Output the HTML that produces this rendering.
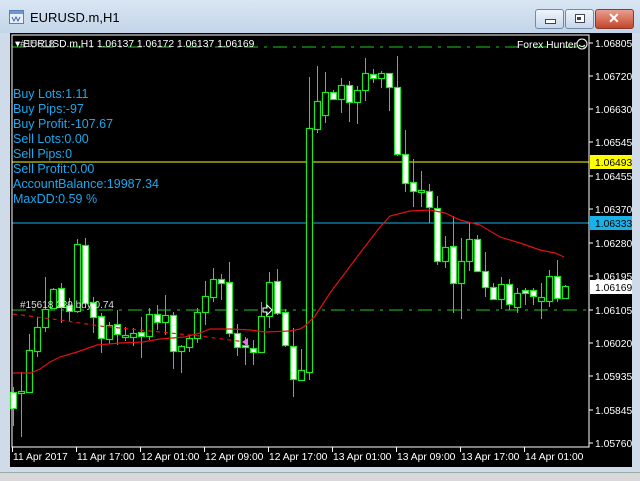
<!DOCTYPE html>
<html><head><meta charset="utf-8"><style>
html,body{margin:0;padding:0;width:640px;height:480px;overflow:hidden;background:#cfdbe8;font-family:"Liberation Sans",sans-serif}
#title{position:absolute;left:0;top:0;width:640px;height:33px;background:linear-gradient(#d9e6f3,#c3d5e9)}
#tt{position:absolute;left:30px;top:10px;font-size:13px;color:#000}
.btn{position:absolute;top:9px;height:18px;border:1px solid #6f8bab;border-radius:3px;background:linear-gradient(#eef4fa,#c7d7ea)}
#chart{position:absolute;left:10px;top:33px;width:622px;height:434px;background:#000}
#bot{position:absolute;left:0;top:472px;width:640px;height:8px;background:#d8d8d8;border-top:1px solid #9aa}
.t{font-family:"Liberation Sans",sans-serif;font-size:10.3px;fill:#fff}
.inf{position:absolute;left:13px;color:#1aa8ee;font-size:12.5px;line-height:15px}
</style></head><body>
<div id="title">
<svg style="position:absolute;left:9px;top:10px" width="16" height="15"><rect x="0.5" y="0.5" width="14" height="13" fill="#e8f0fa" stroke="#5b7fb0"/><rect x="1" y="1" width="13" height="3" fill="#6d98cc"/><path d="M3 7l2 4 2-4 2 4 2-4" stroke="#3b6cb0" fill="none"/></svg>
<div id="tt">EURUSD.m,H1</div>
<div class="btn" style="left:535px;width:27px"><div style="position:absolute;left:9px;top:9px;width:9px;height:3px;background:#fff;border:1px solid #445"></div></div>
<div class="btn" style="left:565px;width:27px"><div style="position:absolute;left:9px;top:4px;width:8px;height:7px;border:1px solid #445;background:#fff"></div><div style="position:absolute;left:11px;top:7px;width:4px;height:3px;background:#445"></div></div>
<div class="btn" style="left:595px;width:37px;background:linear-gradient(#e8a08f,#c4452c);border-color:#8a3a2a"><div style="position:absolute;left:12px;top:0px;color:#fff;font-weight:bold;font-size:14px">✕</div></div>
</div>
<div id="chart"></div>
<svg id="s" style="position:absolute;left:0;top:0" width="640" height="480"></svg>
<div class="inf" style="top:87px">Buy Lots:1.11<br>Buy Pips:-97<br>Buy Profit:-107.67<br>Sell Lots:0.00<br>Sell Pips:0<br>Sell Profit:0.00<br>AccountBalance:19987.34<br>MaxDD:0.59 %</div>
<div id="bot"></div>
<script>
var d=[[13,392,408,387,426,1],[21,391,393,372,437,0],[29,350,392,334,393,0],[37,327,351,317,357,0],[45,309,327,277,332,0],[53,289,308,288,305,0],[61,288,307,283,323,1],[69,305,311,298,322,1],[77,244,311,239,313,0],[85,245,303,238,305,1],[93,302,317,297,333,1],[101,316,338,313,353,1],[109,325,339,322,344,0],[117,324,334,310,345,1],[125,335,337,327,341,0],[133,333,337,328,346,0],[141,332,336,317,358,1],[149,314,336,308,340,0],[157,314,322,305,330,1],[165,315,322,295,335,0],[173,315,351,312,369,1],[181,346,351,345,373,0],[189,338,347,335,352,0],[197,312,338,308,343,0],[205,296,312,281,325,0],[213,279,297,268,302,0],[221,279,283,274,300,1],[229,282,333,262,337,1],[237,333,347,324,356,1],[245,345,347,337,365,1],[253,348,352,340,365,1],[261,316,352,302,353,0],[269,282,316,272,328,0],[277,281,313,269,315,1],[285,312,345,309,347,1],[293,346,379,328,397,1],[301,370,380,349,381,0],[309,128,372,77,380,0],[317,101,129,66,133,0],[325,92,115,72,123,0],[333,92,99,90,100,1],[341,85,99,78,113,0],[349,85,102,81,122,1],[357,90,102,86,124,0],[365,73,90,58,101,0],[373,74,78,69,83,1],[381,73,78,71,88,0],[389,73,87,73,111,1],[397,87,154,56,156,1],[405,154,183,130,192,1],[413,182,191,159,207,1],[421,190,192,171,207,0],[429,191,207,184,223,1],[437,208,261,196,265,1],[445,247,261,236,268,0],[453,246,283,216,313,1],[461,261,283,238,319,0],[469,239,261,223,271,0],[477,239,271,235,271,1],[485,271,287,252,297,1],[493,287,299,283,300,1],[501,284,299,277,309,0],[509,284,304,279,310,1],[517,293,307,288,313,0],[525,290,293,288,305,1],[533,290,296,288,305,1],[541,297,301,283,319,0],[549,276,301,270,307,0],[557,276,298,260,302,1],[565,286,298,285,299,0]];
var h='';
h+='<line x1="12" y1="47" x2="588" y2="47" stroke="#1ec81e" stroke-dasharray="14,6,3,6"/>';
h+='<line x1="12" y1="310" x2="588" y2="310" stroke="#1ec81e" stroke-dasharray="14,6,3,6"/>';
h+='<line x1="12" y1="162" x2="589" y2="162" stroke="#ffff00"/>';
h+='<line x1="12" y1="223" x2="589" y2="223" stroke="#1ab0e8"/>';
d.forEach(function(c){h+='<line x1="'+(c[0]+.5)+'" y1="'+c[3]+'" x2="'+(c[0]+.5)+'" y2="'+c[4]+'" stroke="#22e622"/>';
var hh=Math.max(c[2]-c[1],1);h+='<rect x="'+(c[0]-2.5)+'" y="'+(c[1]+.5)+'" width="6" height="'+hh+'" fill="'+(c[5]?'#fff':'#000')+'" stroke="#22e622" stroke-width="1.2"/>';});
h+='<polyline fill="none" stroke="#e01010" stroke-width="1.2" points="13,373 31,373 40,369 50,362 60,357 77,352 97,345 120,343 143,342 160,339 185,337 200,333 210,329 230,329 250,330 265,332 290,331 300,329 305,326 315,316 330,293 360,253 380,227 390,216 410,211 430,210 445,213 460,220 480,225 500,237 520,243 540,250 555,253 564,257"/>';
h+='<polyline fill="none" stroke="#e01010" stroke-width="1.2" stroke-dasharray="4,4" points="13,314 60,320 100,326 160,332 200,336 245,342"/>';
h+='<path d="M248 338l-6 4 6 4z" fill="#e070e0"/><path d="M263 308h4v-3l5 5-5 5v-3h-4z" fill="#000" stroke="#fff"/>';
h+='<rect x="12" y="35" width="577" height="412" fill="none" stroke="#fff"/>';
var p=[[43,'1.06805'],[76,'1.06720'],[109,'1.06630'],[142,'1.06545'],[176,'1.06455'],[209,'1.06370'],[243,'1.06280'],[276,'1.06195'],[310,'1.06105'],[343,'1.06020'],[376,'1.05935'],[410,'1.05845'],[443,'1.05760']];
p.forEach(function(q){h+='<line x1="589" y1="'+q[0]+'" x2="593" y2="'+q[0]+'" stroke="#fff"/><text class="t" x="595" y="'+(q[0]+4)+'">'+q[1]+'</text>';});
[[162,'#ffff00','1.06493'],[223,'#1ab0e8','1.06333'],[287,'#ffffff','1.06169']].forEach(function(q){h+='<rect x="590" y="'+(q[0]-7)+'" width="42" height="14" fill="'+q[1]+'"/><text class="t" style="fill:#000" x="595" y="'+(q[0]+4)+'">'+q[2]+'</text>';});
var tl=[[13,'11 Apr 2017'],[77,'11 Apr 17:00'],[141,'12 Apr 01:00'],[205,'12 Apr 09:00'],[269,'12 Apr 17:00'],[333,'13 Apr 01:00'],[397,'13 Apr 09:00'],[461,'13 Apr 17:00'],[525,'14 Apr 01:00']];
tl.forEach(function(q){h+='<line x1="'+(q[0]-.5)+'" y1="447" x2="'+(q[0]-.5)+'" y2="452" stroke="#fff"/><text class="t" x="'+q[0]+'" y="460">'+q[1]+'</text>';});
h+='<text class="t" x="15" y="47">▾ EURUSD.m,H1  1.06137 1.06172 1.06137 1.06169</text>';
h+='<text class="t" style="fill:#ccc" x="20" y="47">#15618</text>';
h+='<text class="t" x="517" y="48">Forex Hunter</text><circle cx="582" cy="44" r="5" fill="none" stroke="#fff"/><path d="M579 45q3 3 6 0" stroke="#fff" fill="none"/>';
h+='<text class="t" style="font-size:10px;fill:#ddd" x="20" y="308">#15618 229 buy 0.74</text>';
document.getElementById('s').innerHTML=h;
</script>
</body></html>
